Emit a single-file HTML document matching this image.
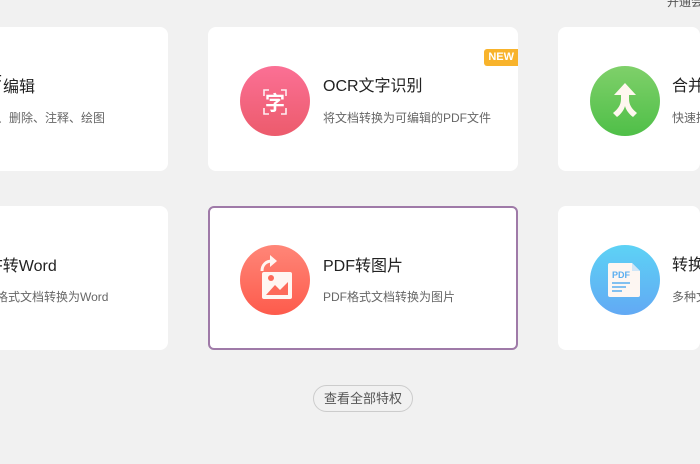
<!DOCTYPE html><html><head><meta charset="utf-8"><style>
*{margin:0;padding:0;box-sizing:border-box}
html,body{overflow:hidden}
body{width:700px;height:464px;background:#f1f1f1;position:relative;overflow:hidden;font-family:"Liberation Sans","Noto Sans CJK SC",sans-serif}
.card{position:absolute;background:#fff;border-radius:8px;width:310px;height:144px;overflow:hidden}
.ic{position:absolute;left:32px;top:39px;width:70px;height:70px;border-radius:50%}
.t{position:absolute;font-size:16px;color:#222;white-space:nowrap}
.s{position:absolute;font-size:12px;color:#666;white-space:nowrap}
.a{position:absolute;white-space:nowrap}
</style></head><body>
<div style="position:absolute;left:0;top:0;width:700px;height:464px;overflow:hidden">
<div class="a" style="left:667px;top:-7px;font-size:12px;color:#555;width:33px;overflow:hidden">开通会员</div>

<div class="card" style="left:-142px;top:27px"></div>
<div class="a" style="left:-8px;top:73px;font-size:16px;color:#222">F</div>
<div class="a" style="left:3px;top:73px;font-size:16px;color:#222">编辑</div>
<div class="a" style="left:-3px;top:109px;font-size:12px;color:#666">、删除、注释、绘图</div>

<div class="card" style="left:208px;top:27px">
 <div class="ic" style="background:linear-gradient(#fb7095,#ec5b6c)">
  <svg width="70" height="70" viewBox="0 0 70 70"><g stroke="#fff" stroke-width="1.6" fill="none" opacity=".9"><path d="M24 30v-6h5M41 24h5v6M24 42v6h5M41 48h5v-6"/></g><text x="35" y="44" text-anchor="middle" font-size="20" font-weight="bold" fill="#fff" font-family="Noto Sans CJK SC">字</text></svg>
 </div>
 <div class="t" style="left:115px;top:45px">OCR文字识别</div>
 <div class="s" style="left:115px;top:82px">将文档转换为可编辑的PDF文件</div>
 <div class="a" style="right:0;top:22px;background:#f8b32b;color:#fff;font-size:11px;font-weight:bold;padding:1px 4px;border-radius:3px 0 0 3px;height:17px;line-height:15px">NEW</div>
</div>

<div class="card" style="left:558px;top:27px;width:142px">
 <div class="ic" style="background:linear-gradient(#7fd06a,#4fbf48)">
  <svg width="70" height="70" viewBox="0 0 70 70"><path d="M35 17l-11 12h7l0 4c0 6-3 10-8 14l4 4c4-3 7-7 8-11 1 4 4 8 8 11l4-4c-5-4-8-8-8-14v-4h7z" fill="#fff7ef"/></svg>
 </div>
 <div class="t" style="left:114px;top:45px">合并PDF</div>
 <div class="s" style="left:114px;top:82px">快速拼接多个文档</div>
</div>

<div class="card" style="left:-142px;top:206px"></div>
<div class="a" style="left:-7px;top:252px;font-size:16px;color:#222">F转Word</div>
<div class="a" style="left:-4px;top:288px;font-size:12px;color:#666">格式文档转换为Word</div>

<div class="card" style="left:208px;top:206px;border:2px solid #9f7aa8;border-radius:6px">
 <div class="ic" style="left:30px;top:37px;background:linear-gradient(#ff8678,#fd5b4c)">
  <svg width="70" height="70" viewBox="0 0 70 70"><rect x="22" y="27" width="30" height="27" rx="2" fill="#fff6f2"/><path d="M26 50l9-10 5 5 8-8v13z" fill="#fd6a5a"/><circle cx="31" cy="33" r="3" fill="#fd6a5a"/><path d="M22 26c0-6 4-10 10-10" stroke="#fff6f2" stroke-width="3" fill="none"/><path d="M30 10l7 6-7 6z" fill="#fff6f2"/></svg>
 </div>
 <div class="t" style="left:113px;top:44px">PDF转图片</div>
 <div class="s" style="left:113px;top:80px">PDF格式文档转换为图片</div>
</div>

<div class="card" style="left:558px;top:206px;width:142px">
 <div class="ic" style="background:linear-gradient(#5dd2f5,#62a9f4)">
  <svg width="70" height="70" viewBox="0 0 70 70"><path d="M20 18h22l8 8v24a2 2 0 0 1-2 2H20a2 2 0 0 1-2-2V20a2 2 0 0 1 2-2z" fill="#fdf6f2"/><path d="M42 18v8h8z" fill="#cfe6f8"/><text x="22" y="33" font-size="9" font-weight="bold" fill="#5aaef0" font-family="Liberation Sans">PDF</text><path d="M22 38h18M22 42h14M22 46h10" stroke="#5aaef0" stroke-width="1.5"/></svg>
 </div>
 <div class="t" style="left:114px;top:45px">转换PDF</div>
 <div class="s" style="left:114px;top:82px">多种文档格式互转</div>
</div>

<div class="a" style="left:313px;top:385px;width:100px;height:27px;border:1px solid #ccc;border-radius:14px;text-align:center;line-height:25px;font-size:13px;color:#555">查看全部特权</div>
</div>
</body></html>
